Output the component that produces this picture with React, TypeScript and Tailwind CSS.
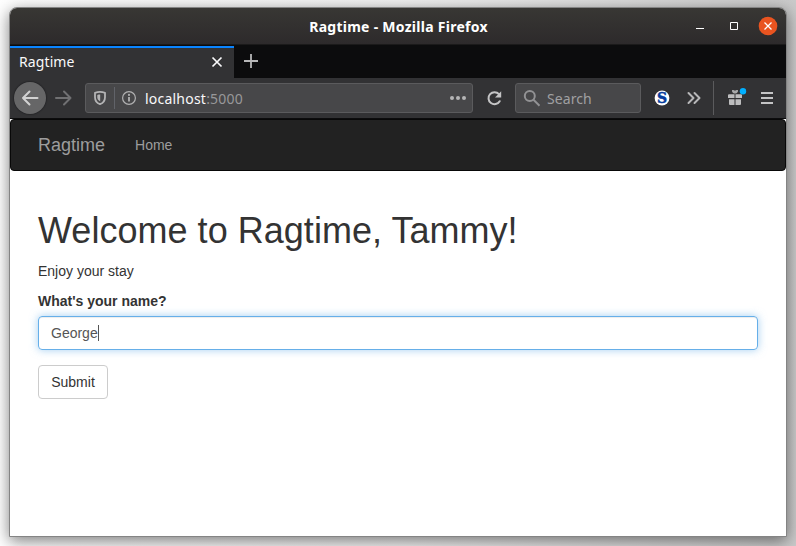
import React from "react";

const uiFont = "font-['Noto_Sans','Open_Sans',sans-serif]";
const pageFont = "font-['Liberation_Sans',Arial,sans-serif]";

function TitleBar() {
  return (
    <header className="flex h-9 shrink-0 items-center bg-linear-to-b from-[#383734] to-[#2d2a2b] text-white">
      <div className="w-[106px]" />
      <h1 className="flex-1 pt-px pl-[1px] text-center text-[14px] leading-5 font-bold tracking-[0.27px] whitespace-nowrap">
        Ragtime - Mozilla Firefox
      </h1>
      <div className="flex w-[106px] items-center">
        <svg className="ml-[12px]" width="94" height="24" viewBox="0 0 94 24">
          <path d="M4 14.5h8" stroke="#fff" strokeWidth="1" fill="none" />
          <path d="M38.5 8.5h7v7h-7z" stroke="#fff" strokeWidth="1" fill="none" />
          <circle cx="76" cy="12" r="9.3" fill="#e95420" />
          <path d="m72.5 8.5 7 7m0-7-7 7" stroke="#fff" strokeWidth="1.3" fill="none" />
        </svg>
      </div>
    </header>
  );
}

function TabBar() {
  return (
    <div className="flex h-[34px] shrink-0 border-t border-[#1b1a1a] bg-[#0c0c0d]">
      <div className="mt-px flex w-[224px] items-start border-t-2 border-[#0a84ff] bg-[#323234] pt-[4px] pl-[9px] text-[14px] leading-5 text-[#f9f9fa]">
        <span className="flex-1 tracking-[0.1px]">Ragtime</span>
        <svg className="mt-[4px] mr-[11px]" width="12" height="12" viewBox="0 0 12 12">
          <path d="m1.5 1.5 9 9m0-9-9 9" stroke="#f9f9fa" strokeWidth="1.7" fill="none" />
        </svg>
      </div>
      <svg className="mt-[9px] ml-[10px]" width="14" height="14" viewBox="0 0 14 14">
        <path d="M7 0v14M0 7h14" stroke="#b8b8b9" strokeWidth="1.8" />
      </svg>
    </div>
  );
}

function Toolbar() {
  return (
    <div className="flex h-[41px] shrink-0 items-center border-b border-[#0c0c0d] bg-[#323234] pl-[4px] text-[14px] leading-5">
      <div className="flex size-8 items-center justify-center rounded-full bg-[#666667] shadow-[0_0_1px_1px_rgba(20,20,22,0.35)]">
        <svg width="18" height="16" viewBox="0 0 18 16" fill="none" stroke="#d2d2d2" strokeWidth="2" strokeLinecap="round" strokeLinejoin="round">
          <path d="M16.500 8H2m6.500-6.500L2 8l6.500 6.500" />
        </svg>
      </div>
      <svg className="ml-[8px]" width="18" height="16" viewBox="0 0 18 16" fill="none" stroke="#707072" strokeWidth="2" strokeLinecap="round" strokeLinejoin="round">
        <path d="M2 8H16.500M10 1.500 16.500 8l-6.500 6.500" />
      </svg>
      <div className="ml-[13px] flex h-[30px] w-[388px] items-center rounded-[3px] border border-[#5b5b5d] bg-[#474749] pl-[7px]">
        <svg width="14" height="16" viewBox="0 0 14 16">
          <path d="M7 1.900c2 0 3.600.4 5 .9v4.400c0 3.200-1.700 5.800-5 7-3.300-1.200-5-3.800-5-7V2.800c1.400-.5 3-.9 5-.9z" fill="none" stroke="#b4b4b5" strokeWidth="1.800" strokeLinejoin="round" />
          <path d="M7.200 4.600v6.800C5.200 10.400 4.300 9 4.300 7.200V5C5.200 4.700 6.200 4.600 7.200 4.600z" fill="#b4b4b5" />
        </svg>
        <div className="ml-[7px] h-[22px] w-px bg-[#616369]" />
        <svg className="ml-[7px]" width="14" height="14" viewBox="0 0 14 14">
          <circle cx="7" cy="7" r="6.400" fill="none" stroke="#b1b1b2" strokeWidth="1.200" />
          <path d="M7 6.100v4.400" stroke="#b1b1b2" strokeWidth="1.800" />
          <circle cx="7" cy="3.900" r="1.050" fill="#b1b1b2" />
        </svg>
        <span className="ml-[9px] flex-1 pt-px tracking-[0.22px] text-[#f9f9fa]">
          localhost<span className="text-[#98989a]">:5000</span>
        </span>
        <svg className="mr-[5px]" width="18" height="4" viewBox="0 0 18 4" fill="#b5b5b6">
          <circle cx="3" cy="2" r="2" />
          <circle cx="9" cy="2" r="2" />
          <circle cx="15" cy="2" r="2" />
        </svg>
      </div>
      <svg className="ml-[13px]" width="16" height="16" viewBox="0 0 16 16">
        <path d="M13.700 11.200A6 6 0 1 1 13 4.200" fill="none" stroke="#c4c4c5" strokeWidth="2" strokeLinecap="round" />
        <path d="M15.200 1.200v6.300H9z" fill="#c4c4c5" />
      </svg>
      <div className="ml-[13px] flex h-[30px] w-[126px] items-center rounded-[3px] border border-[#5b5b5d] bg-[#474749] pl-[7px]">
        <svg width="18" height="18" viewBox="0 0 18 18" fill="none" stroke="#929294" strokeWidth="2">
          <circle cx="6.800" cy="7" r="5" />
          <path d="m10.500 10.700 6 6" />
        </svg>
        <span className="ml-[6px] pt-px tracking-[0.08px] text-[#a0a0a2]">Search</span>
      </div>
      <svg className="ml-[13px]" width="16" height="16" viewBox="0 0 16 16">
        <circle cx="8" cy="8" r="7.400" fill="#fff" />
        <text x="8" y="13.100" textAnchor="middle" className="fill-[#053c9c] stroke-[#053c9c] font-['DejaVu_Serif',serif] text-[14px] font-bold" strokeWidth="0.5">
          S
        </text>
      </svg>
      <svg className="ml-[17px]" width="14" height="14" viewBox="0 0 14 14" fill="none" stroke="#b7b7b8" strokeWidth="2" strokeLinecap="round" strokeLinejoin="round">
        <path d="m1.500 2 5 5-5 5m6-10 5 5-5 5" />
      </svg>
      <div className="ml-[12px] h-[34px] w-px bg-[#5b5b5d]" />
      <svg className="ml-[13px]" width="20" height="20" viewBox="0 0 20 20">
        <path d="M2 6.200h5.500V10H1V7.200a1 1 0 0 1 1-1zM8.500 6.200H14a1 1 0 0 1 1 1V10H8.500zM2 11.200h5.500V17H3a1 1 0 0 1-1-1zM8.500 11.200H14V16a1 1 0 0 1-1 1H8.500z" fill="#bdbdbe" />
        <path d="M5 2.300c.9-.6 2.200-.3 3 .5.800-.8 2.100-1.100 3-.5.400 1.300-.9 2.700-2 3.300H7c-1.100-.6-2.400-2-2-3.300z" fill="#a9a9aa" />
        <circle cx="16" cy="3.200" r="3.200" fill="#00b0ff" />
      </svg>
      <svg className="ml-[14px]" width="12" height="12" viewBox="0 0 12 12" stroke="#c4c4c5" strokeWidth="2">
        <path d="M0 1h12M0 6h12M0 11h12" />
      </svg>
    </div>
  );
}

function Page() {
  return (
    <main className={`min-h-0 flex-1 bg-white text-[14px] leading-5 text-[#333] ${pageFont}`}>
      <nav className="flex h-[52px] items-center rounded-[4px] border border-[#080808] bg-[#222] pl-[27px] text-[#9d9d9d]">
        <a className="text-[18px]">Ragtime</a>
        <a className="ml-[30px]">Home</a>
      </nav>
      <div className="px-[28px] pt-[40px]">
        <h1 className="text-[36px] leading-[40px] tracking-[0.03px] whitespace-nowrap">Welcome to Ragtime, Tammy!</h1>
        <p className="mt-[10px]">Enjoy your stay</p>
        <form className="mt-[10px]" onSubmit={(e) => e.preventDefault()}>
          <label className="block font-bold">What&apos;s your name?</label>
          <div className="mt-[5px] flex h-[34px] items-center rounded-[4px] border border-[#66afe9] px-[12px] text-[#555] shadow-[inset_0_1px_1px_rgba(0,0,0,0.075),0_0_8px_rgba(102,175,233,0.6)]">
            <span>George</span>
            <span className="h-4 w-px bg-[#555]" />
          </div>
          <button type="submit" className="mt-[15px] block h-[34px] w-[70px] rounded-[4px] border border-[#ccc] bg-white text-center">
            Submit
          </button>
        </form>
      </div>
    </main>
  );
}

export default function App() {
  return (
    <div className={`h-[546px] w-[796px] overflow-hidden bg-linear-to-r from-white via-[#f2f2f2] to-[#cacaca] px-[9px] pt-[7px] ${uiFont}`}>
      <div className="flex h-[530px] w-[778px] flex-col overflow-hidden rounded-t-[8px] border border-[#848484] bg-white shadow-[0_4px_16px_rgba(0,0,0,0.5)]">
        <TitleBar />
        <TabBar />
        <Toolbar />
        <Page />
      </div>
    </div>
  );
}
